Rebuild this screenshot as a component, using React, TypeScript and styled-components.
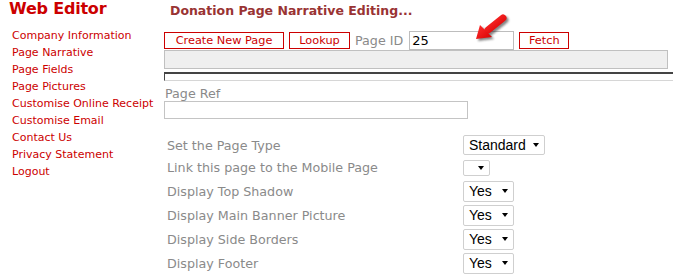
import styled, { createGlobalStyle } from 'styled-components';

const GlobalStyle = createGlobalStyle`
body {
  margin: 0;
  background: #ffffff;
  overflow: hidden;
  font-family: "DejaVu Sans", Verdana, sans-serif;
}
`

const Page = styled.div`
display: flex;
align-items: flex-start;
`

const Sidebar = styled.div`
width: 164px;
flex-shrink: 0;
`

const Brand = styled.div`
padding-left: 9px;
font-size: 16px;
line-height: 17px;
font-weight: bold;
letter-spacing: -0.2px;
color: #cc0000;
`

const NavList = styled.ul`
list-style: none;
margin: 10px 0 0;
padding: 0 0 0 12px;
`

const NavLink = styled.li`
font-size: 11px;
line-height: 17px;
color: #cc0000;
white-space: nowrap;
`

const Main = styled.div`
flex: 1;
min-width: 0;
display: flex;
flex-direction: column;
`

const Heading = styled.div`
margin-top: 3px;
padding-left: 6px;
font-size: 12.5px;
line-height: 16px;
font-weight: bold;
color: #993333;
white-space: nowrap;
`

const Toolbar = styled.div`
position: relative;
margin-top: 12px;
height: 19px;
display: flex;
align-items: center;
gap: 5px;
`

const RedButton = styled.div<{ $width: number }>`
box-sizing: border-box;
width: ${p => p.$width}px;
height: 17px;
border: 1px solid #cc0000;
background: #ffffff;
color: #cc0000;
font-size: 11.3px;
line-height: 15px;
text-align: center;
white-space: nowrap;
`

const Label = styled.div`
font-size: 12.7px;
line-height: 15px;
color: #8a8a8a;
white-space: nowrap;
`

const IdInput = styled.div`
box-sizing: border-box;
width: 105px;
height: 19px;
margin-left: 1px;
border: 1px solid #bdbdbd;
padding-left: 2px;
font-size: 13px;
line-height: 17px;
color: #000000;
`

const Pointer = styled.svg`
position: absolute;
left: 310px;
top: -18px;
`

const StatusBar = styled.div`
box-sizing: border-box;
width: 504px;
height: 19px;
background: #efefef;
border: 1px solid #c0c0c0;
`

const Divider = styled.div`
margin-top: 3px;
width: 540px;
height: 6px;
border-top: 2px solid #444444;
border-left: 1px solid #444444;
border-bottom: 1px solid #d6d6d6;
`

const RefLabel = styled(Label)`
margin-top: 5px;
padding-left: 1px;
`

const RefInput = styled.div`
box-sizing: border-box;
width: 304px;
height: 18px;
border: 1px solid #c4c4c4;
`

const Settings = styled.div`
margin-top: 15px;
display: grid;
grid-template-columns: 299px auto;
grid-template-rows: 22px 23px repeat(4, 24px);
align-items: center;
`

const SettingLabel = styled(Label)`
padding-left: 3px;
`

const SelectBox = styled.div<{ $width: number; $height: number }>`
box-sizing: border-box;
width: ${p => p.$width}px;
height: ${p => p.$height}px;
display: flex;
align-items: center;
justify-content: space-between;
padding: 0 5px 0 5px;
border: 1px solid #cfcfcf;
border-radius: 2px;
font-family: "Liberation Sans", Arial, sans-serif;
font-size: 14px;
color: #000000;
`

const Caret = styled.span`
width: 0;
height: 0;
margin-left: auto;
border-left: 3.5px solid transparent;
border-right: 3.5px solid transparent;
border-top: 4px solid #000000;
`

const navItems = [
  "Company Information",
  "Page Narrative",
  "Page Fields",
  "Page Pictures",
  "Customise Online Receipt",
  "Customise Email",
  "Contact Us",
  "Privacy Statement",
  "Logout",
]

const settings = [
  { label: "Set the Page Type", value: "Standard", width: 82, height: 20 },
  { label: "Link this page to the Mobile Page", value: "", width: 27, height: 16 },
  { label: "Display Top Shadow", value: "Yes", width: 51, height: 21 },
  { label: "Display Main Banner Picture", value: "Yes", width: 51, height: 21 },
  { label: "Display Side Borders", value: "Yes", width: 51, height: 21 },
  { label: "Display Footer", value: "Yes", width: 51, height: 21 },
]

const Arrow = () =>
  <Pointer width="40" height="34" viewBox="0 0 40 34">
    <defs>
      <filter id="blur" x="-20%" y="-20%" width="140%" height="140%">
        <feGaussianBlur stdDeviation="1.2" />
      </filter>
      <linearGradient id="red" x1="0" y1="0" x2="1" y2="1">
        <stop offset="0" stopColor="#ff3030" />
        <stop offset="1" stopColor="#d80000" />
      </linearGradient>
    </defs>
    <g transform="translate(2 2)" fill="#222" stroke="#222" opacity="0.55" filter="url(#blur)">
      <line x1="14" y1="17" x2="29" y2="5" strokeWidth="7" strokeLinecap="round" />
      <polygon points="2,26 6,12 18,24" stroke="none" />
    </g>
    <g fill="url(#red)" stroke="url(#red)">
      <line x1="14" y1="17" x2="29" y2="5" strokeWidth="7" strokeLinecap="round" />
      <polygon points="2,26 6,12 18,24" stroke="none" />
    </g>
  </Pointer>

const App = () =>
  <Page>
    <GlobalStyle />
    <Sidebar>
      <Brand>Web Editor</Brand>
      <NavList>
        {navItems.map(item => <NavLink key={item}>{item}</NavLink>)}
      </NavList>
    </Sidebar>
    <Main>
      <Heading>Donation Page Narrative Editing...</Heading>
      <Toolbar>
        <RedButton $width={120}>Create New Page</RedButton>
        <RedButton $width={61}>Lookup</RedButton>
        <Label>Page ID</Label>
        <IdInput>25</IdInput>
        <RedButton $width={50}>Fetch</RedButton>
        <Arrow />
      </Toolbar>
      <StatusBar />
      <Divider />
      <RefLabel>Page Ref</RefLabel>
      <RefInput />
      <Settings>
        {settings.map(s => [
          <SettingLabel key={s.label}>{s.label}</SettingLabel>,
          <SelectBox key={s.label + "-select"} $width={s.width} $height={s.height}>
            {s.value}
            <Caret />
          </SelectBox>,
        ])}
      </Settings>
    </Main>
  </Page>

export default App;
